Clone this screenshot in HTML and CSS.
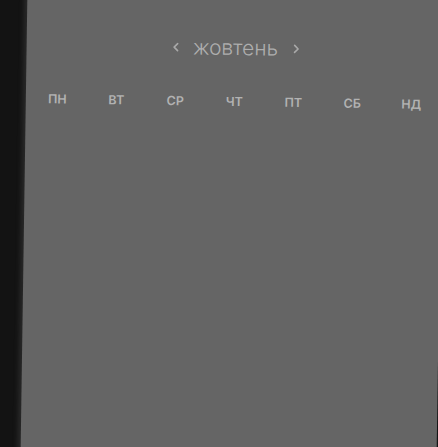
FILE: index.html
```
<!DOCTYPE html>
<html lang="uk">
<head>
<meta charset="utf-8">
<link rel="stylesheet" href="styles.css">
</head>
<body>
<div class="panel">
  <div class="header">
    <svg class="arrow" width="8" height="10" viewBox="0 0 8 10"><path d="M6 1.5 L2.5 5 L6 8.5" fill="none" stroke="#a9a9a9" stroke-width="1.6" stroke-linecap="round" stroke-linejoin="round"/></svg>
    <span class="month">жовтень</span>
    <svg class="arrow" width="8" height="10" viewBox="0 0 8 10"><path d="M2 1.5 L5.5 5 L2 8.5" fill="none" stroke="#a9a9a9" stroke-width="1.6" stroke-linecap="round" stroke-linejoin="round"/></svg>
  </div>
  <div class="weekdays">
    <span>пн</span><span>вт</span><span>ср</span><span>чт</span><span>пт</span><span>сб</span><span>нд</span>
  </div>
</div>
</body>
</html>
```
FILE: styles.css
```
html, body {
  margin: 0;
  padding: 0;
  height: 100%;
  overflow: hidden;
  background: #131313;
}
body {
  font-family: Inter, "Noto Sans", sans-serif;
}
.panel {
  margin-left: 24px;
  margin-top: -26px;
  width: 416px;
  height: 500px;
  background: #656565;
  transform: rotate(0.85deg);
  box-shadow: -3px 0 5px rgba(70, 70, 70, 0.45);
  display: flex;
  flex-direction: column;
  align-items: center;
  padding-top: 59px;
  box-sizing: border-box;
}
.header {
  height: 30px;
  display: flex;
  align-items: center;
  gap: 14px;
  margin-left: 2px;
}
.arrow {
  display: block;
}
.month {
  font-size: 21px;
  font-weight: 300;
  color: #aeaeae;
  line-height: 30px;
}
.weekdays {
  margin-top: 31px;
  align-self: stretch;
  padding: 0 2px;
  display: grid;
  grid-template-columns: repeat(7, 59px);
}
.weekdays span {
  text-align: center;
  text-transform: uppercase;
  font-size: 12.5px;
  font-weight: 600;
  color: #b2b2b2;
  line-height: 16px;
}
```
